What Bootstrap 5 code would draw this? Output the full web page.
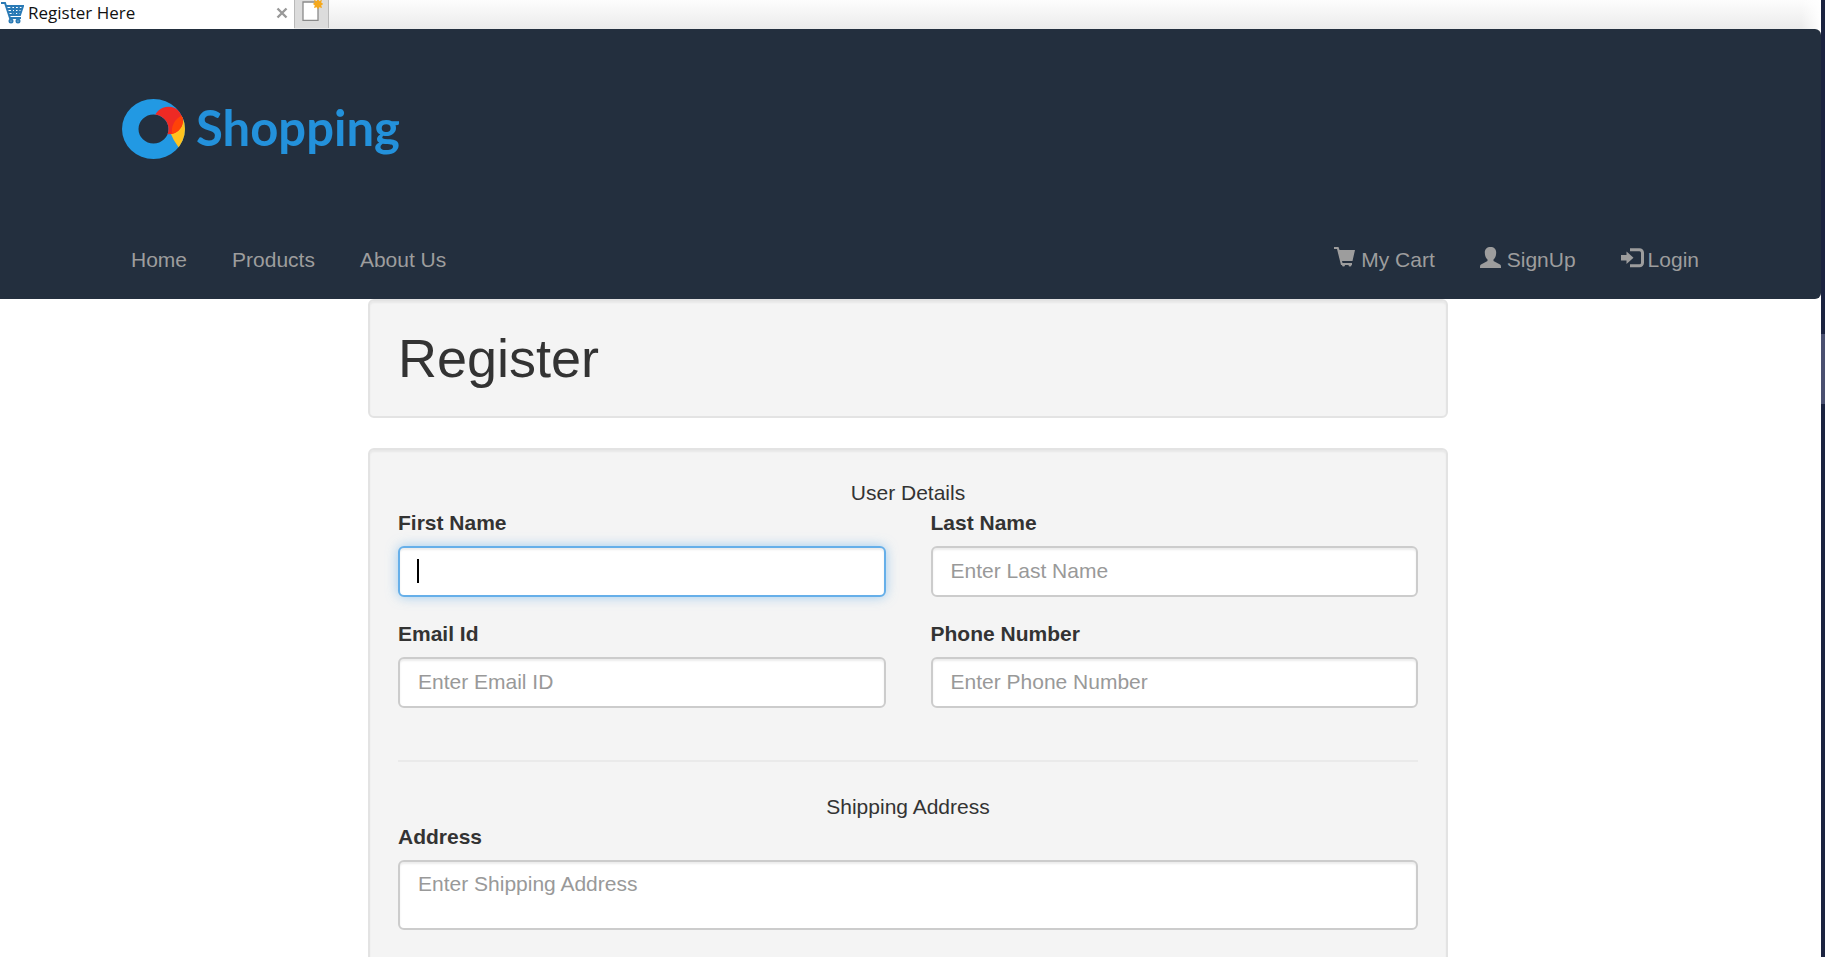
<!DOCTYPE html>
<html lang="en">
<head>
<meta charset="utf-8">
<meta name="viewport" content="width=device-width, initial-scale=1">
<title>Register Here</title>
<link href="https://cdn.jsdelivr.net/npm/bootstrap@5.3.0/dist/css/bootstrap.min.css" rel="stylesheet">
<style>
  body { font: 21px/30px "Liberation Sans", Arial, sans-serif; color: #333; background: #fff; }
  .tab-strip { height: 29px; background: linear-gradient(90deg, transparent calc(100% - 20px), #fff 100%), linear-gradient(#fdfdfd, #ebebeb); }
  .page-tab { width: 294px; background: #fff; color: #111; font: 17px/24px "Open Sans", sans-serif; padding: 0 6px 4px 0; }
  .tab-close { color: #999; line-height: 0; }
  .new-tab { width: 35px; height: 28px; background: #dcdcdc; border: solid #b9b9b9; border-width: 0 1px; }
  .desktop-edge { width: 4px; background: linear-gradient(#1b2340 334px, #4a5070 334px 404px, #1b2340 404px); }
  .site-header { background: #232f3e; border-radius: 0 6px 6px 0; padding: 70px 122px 24px 122px; }
  .site-header nav { margin-top: 86px; padding-left: 9px; }
  .site-header svg, .tab-strip svg { display: block; flex: none; }
  .brand { height: 60px; gap: 10px; color: #2391db; font: bold 49px/58px Lato, sans-serif; }
  .brand span { padding-bottom: 4px; }
  .menu { gap: 45px; }
  .menu a { color: #9d9d9d; text-decoration: none; }
  .page-body { padding-right: 5px; }
  .form-column { width: 100%; max-width: 1080px; }
  .well { background: #f4f4f4; border: 2px solid #e3e3e3; border-radius: 6px; box-shadow: inset 0 2px 2px rgba(0,0,0,.05); padding: 28px; margin-bottom: 30px; }
  .well h1 { font-size: 54px; line-height: 59px; font-weight: 500; margin: 0; }
  .field-row { --bs-gutter-x: 45px; }
  .field { margin-bottom: 22px; }
  .field label { display: block; font-weight: 700; margin-bottom: 8px; }
  .field .form-control { height: 51px; padding: 7px 18px 9px; border: 2px solid #ccc; border-radius: 6px; font-size: 21px; line-height: 30px; color: #555; background: #fff; box-shadow: inset 0 2px 2px rgba(0,0,0,.075); }
  .field textarea.form-control { height: 70px; resize: none; }
  .field .form-control::placeholder { color: #999; }
  .field .form-control:focus { border-color: #66afe9; caret-color: transparent; box-shadow: inset 0 2px 2px rgba(0,0,0,.075), 0 0 12px rgba(102,175,233,.6); }
  .caret { left: 19px; top: 13px; width: 2px; height: 24px; background: #000; visibility: hidden; }
  .form-control:focus + .caret { visibility: visible; }
  .rule { border: 0; border-top: 2px solid #eaeaea; opacity: 1; margin: 30px 0; }
</style>
</head>
<body>
<div class="d-flex vh-100 overflow-hidden">
  <div class="flex-grow-1">
    <div class="tab-strip d-flex">
      <div class="page-tab d-flex align-items-center">
        <svg width="24" height="24" viewBox="0 0 24 24" fill="none" stroke="#2a7ab5" stroke-width="2"><path d="M1 2h4l5 15h11M6 5h17l-3 9H9M7 8h15M8 11h13M11 5l2 9M15 5v9M19 5l-1 9"/><circle cx="11" cy="20" r="1.5"/><circle cx="18" cy="20" r="1.5"/></svg>
        <span class="ms-1 flex-grow-1">Register Here</span>
        <button type="button" class="tab-close border-0 bg-transparent p-0" aria-label="Close tab"><svg width="12" height="12" viewBox="0 0 12 12" stroke="#999" stroke-width="2.4"><path d="M1.5 1.5l9 9M10.500 1.500l-9 9"/></svg></button>
      </div>
      <button type="button" class="new-tab p-0 d-flex justify-content-center" aria-label="New tab">
        <svg width="23" height="22" viewBox="0 0 23 22"><path d="M3 2h15v18.300H3z" fill="#fff" stroke="#8a8a8a" stroke-width="1.300"/><path d="M18-1.500l1.200 2.700L22-.3l-.8 2.800 2 1.500-2 1.300.8 2.700-2.800-.8L18 9.500l-1.300-2.300-2.700.8.800-2.700-2-1.300 2-1.500L14-.3l2.700 1.500z" fill="#f5a81c"/></svg>
      </button>
    </div>
    <header class="site-header">
      <a href="#" class="brand d-flex align-items-center text-decoration-none">
        <svg width="64" height="60" viewBox="0 0 64 60">
          <defs><clipPath id="ring"><path clip-rule="evenodd" d="M0 30a31.500 30 0 1 1 63 0a31.500 30 0 1 1-63 0M16.500 30a15 14.500 0 1 0 30 0a15 14.500 0 1 0-30 0"/></clipPath></defs>
          <g clip-path="url(#ring)"><path fill="#2299e3" d="M0 0h64v60H0z"/><path fill="#ffc31f" d="M64 14L48 33Q51 41 57 49h7z"/><ellipse cx="46.500" cy="21.500" rx="14.500" ry="13.800" fill="#ee2a24"/><path fill="#ff4208" d="M60 16.500C52 20 49 28 50 35 58 33 63 25 60 16.500z"/></g>
        </svg>
        <span>Shopping</span>
      </a>
      <nav class="d-flex justify-content-between">
        <div class="menu d-flex">
          <a href="#">Home</a><a href="#">Products</a><a href="#">About Us</a>
        </div>
        <div class="menu d-flex">
          <a href="#" class="d-flex"><svg class="me-1" width="23" height="25" viewBox="0 0 23 25" fill="#9d9d9d"><path d="M0 2h4.500l1 3H21l-2.500 11H8l.5 2H18v2h-.5a1.500 1.500 0 0 1-3 0H11a1.500 1.500 0 0 1-3 0H7L3 4H0z"/></svg>My Cart</a>
          <a href="#" class="d-flex"><svg class="me-1" width="23" height="25" viewBox="0 0 23 25" fill="#9d9d9d"><path d="M10.500 2c3.500 0 5.700 2 5.700 5.500 0 3-1 5.500-2.700 7v1.500l6.500 3.500c1 .6 1 1.500 1 3.500H0c0-2 0-2.900 1-3.500L7.500 16v-1.500c-1.700-1.500-2.700-4-2.700-7C4.800 4 7 2 10.500 2z"/></svg>SignUp</a>
          <a href="#" class="d-flex"><svg class="me-1" width="23" height="25" viewBox="0 0 23 25"><path fill="#9d9d9d" d="M0 10h5.500V6.500l7 6.200-7 6.300v-3.500H0z"/><path d="M9 4.700h9.500a3 3 0 0 1 3 3v10.100a3 3 0 0 1-3 3H9" fill="none" stroke="#9d9d9d" stroke-width="3"/></svg>Login</a>
        </div>
      </nav>
    </header>
    <div class="page-body">
    <main class="form-column mx-auto">
      <div class="well"><h1>Register</h1></div>
      <form class="well">
        <div class="text-center">User Details</div>
        <div class="row field-row">
          <div class="col-6 field">
            <label for="first">First Name</label>
            <div class="position-relative"><input id="first" type="text" class="form-control" autofocus><span class="caret position-absolute"></span></div>
          </div>
          <div class="col-6 field">
            <label for="last">Last Name</label>
            <input id="last" type="text" class="form-control" placeholder="Enter Last Name">
          </div>
          <div class="col-6 field">
            <label for="email">Email Id</label>
            <input id="email" type="email" class="form-control" placeholder="Enter Email ID">
          </div>
          <div class="col-6 field">
            <label for="phone">Phone Number</label>
            <input id="phone" type="tel" class="form-control" placeholder="Enter Phone Number">
          </div>
        </div>
        <hr class="rule">
        <div class="text-center">Shipping Address</div>
        <div class="field">
          <label for="address">Address</label>
          <textarea id="address" class="form-control" placeholder="Enter Shipping Address"></textarea>
        </div>
      </form>
    </main>
    </div>
  </div>
  <div class="desktop-edge flex-shrink-0"></div>
</div>
<script src="https://cdn.jsdelivr.net/npm/bootstrap@5.3.0/dist/js/bootstrap.bundle.min.js"></script>
</body>
</html>
